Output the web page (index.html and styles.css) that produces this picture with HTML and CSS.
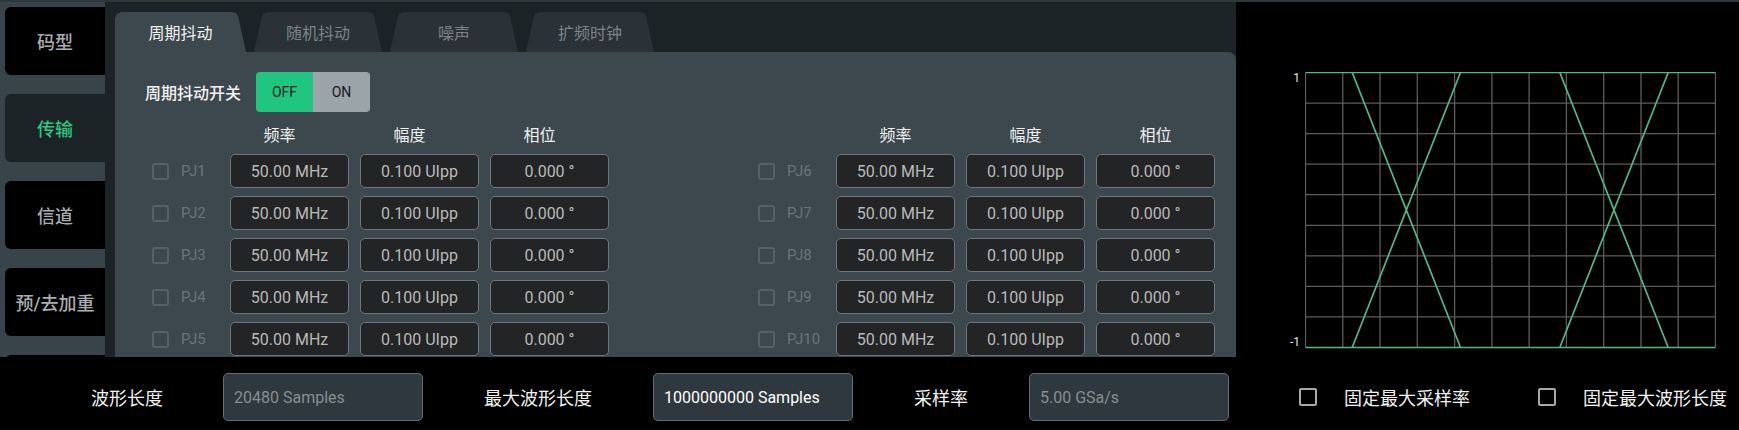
FILE: index.html
```html
<!DOCTYPE html>
<html lang="zh-CN">
  <head>
      <meta charset="UTF-8">
      <meta name="viewport" content="width=device-width, initial-scale=1.0">
      <title>传输 - 周期抖动</title>
      <link rel="stylesheet" href="styles.css">
  </head>
  <body>
      <div class="top">
          <nav class="side">
              <div class="side-btn">码型</div>
              <div class="side-btn active">传输</div>
              <div class="side-btn">信道</div>
              <div class="side-btn">预/去加重</div>
              <div class="side-btn"></div>
          </nav>

          <section class="center">
              <div class="tabs">
                  <div class="tab first">周期抖动</div>
                  <div class="tab">随机抖动</div>
                  <div class="tab">噪声</div>
                  <div class="tab">扩频时钟</div>
              </div>
              <div class="panel">
                  <div class="switch-row">
                      <span class="switch-label">周期抖动开关</span>
                      <div class="switch"><span class="off">OFF</span><span class="on">ON</span></div>
                  </div>
                  <div class="groups">
                      <!-- PJ1 - PJ5 -->
                      <div class="group shifted">
                          <span></span><span></span>
                          <span class="hd">频率</span><span class="hd">幅度</span><span class="hd">相位</span>

                          <span class="chk"></span><span class="pj">PJ1</span>
                          <span class="field">50.00 MHz</span><span class="field">0.100 UIpp</span><span class="field">0.000 °</span>
                          <span class="chk"></span><span class="pj">PJ2</span>
                          <span class="field">50.00 MHz</span><span class="field">0.100 UIpp</span><span class="field">0.000 °</span>
                          <span class="chk"></span><span class="pj">PJ3</span>
                          <span class="field">50.00 MHz</span><span class="field">0.100 UIpp</span><span class="field">0.000 °</span>
                          <span class="chk"></span><span class="pj">PJ4</span>
                          <span class="field">50.00 MHz</span><span class="field">0.100 UIpp</span><span class="field">0.000 °</span>
                          <span class="chk"></span><span class="pj">PJ5</span>
                          <span class="field">50.00 MHz</span><span class="field">0.100 UIpp</span><span class="field">0.000 °</span>
                      </div>
                      <!-- PJ6 - PJ10 -->
                      <div class="group">
                          <span></span><span></span>
                          <span class="hd">频率</span><span class="hd">幅度</span><span class="hd">相位</span>

                          <span class="chk"></span><span class="pj">PJ6</span>
                          <span class="field">50.00 MHz</span><span class="field">0.100 UIpp</span><span class="field">0.000 °</span>
                          <span class="chk"></span><span class="pj">PJ7</span>
                          <span class="field">50.00 MHz</span><span class="field">0.100 UIpp</span><span class="field">0.000 °</span>
                          <span class="chk"></span><span class="pj">PJ8</span>
                          <span class="field">50.00 MHz</span><span class="field">0.100 UIpp</span><span class="field">0.000 °</span>
                          <span class="chk"></span><span class="pj">PJ9</span>
                          <span class="field">50.00 MHz</span><span class="field">0.100 UIpp</span><span class="field">0.000 °</span>
                          <span class="chk"></span><span class="pj">PJ10</span>
                          <span class="field">50.00 MHz</span><span class="field">0.100 UIpp</span><span class="field">0.000 °</span>
                      </div>
                  </div>
              </div>
          </section>

          <section class="scope">
              <div class="axis"><span>1</span><span>-1</span></div>
              <svg class="eye" width="411" height="277" viewBox="-0.5 -0.5 411 277">
                  <path class="grid" d="M0 0V275M37.3 0V275M74.5 0V275M111.8 0V275M149.1 0V275M186.4 0V275M223.6 0V275M260.9 0V275M298.2 0V275M335.5 0V275M372.7 0V275M410 0V275
                      M0 30.6H410M0 61.1H410M0 91.7H410M0 122.2H410M0 152.8H410M0 183.3H410M0 213.9H410M0 244.4H410"/>
                  <path class="trace" d="M0 0H410M0 275H410M46.7 0L155 275M46.7 275L155 0M254.3 0L362.7 275M254.3 275L362.7 0"/>
              </svg>
          </section>
      </div>

      <div class="bottom">
          <span class="b-label w1">波形长度</span>
          <div class="b-input dim">20480 Samples</div>
          <span class="b-label w2">最大波形长度</span>
          <div class="b-input">1000000000 Samples</div>
          <span class="b-label w3">采样率</span>
          <div class="b-input dim">5.00 GSa/s</div>
          <div class="b-check c1"><span class="box"></span>固定最大采样率</div>
          <div class="b-check c2"><span class="box"></span>固定最大波形长度</div>
      </div>
  </body>
</html>
```

FILE: styles.css
```css
*     {
      box-sizing: border-box;
}
body  {
    margin: 0;
    width: 1739px;
    height: 430px;
    overflow: hidden;
    background: #000;
    color: #fff;
    font-family: Roboto, "Noto Sans CJK SC", sans-serif;
    font-size: 16px;
}

/* ---- upper area ---- */
.top  {
    display: flex;
    height: 357px;
    border-top: 2px solid #2f373b;
}

.side {
    width: 105px;
    background: #38434a;
    padding: 5px 0 0 5px;
    display: flex;
    flex-direction: column;
    gap: 19px;
    overflow: hidden;
}
.side-btn {
    flex: none;
    height: 68px;
    background: #000;
    border-radius: 6px 0 0 6px;
    color: #a8aeb1;
    font-size: 18px;
    font-weight: 500;
    display: flex;
    align-items: center;
    justify-content: center;
}
.side-btn.active {
    background: #1c2326;
    color: #2fc582;
}

.center   {
    width: 1131px;
    background: #1c2326;
    padding: 10px 0 0 10px;
    display: flex;
    flex-direction: column;
}
.tabs {
    display: flex;
    gap: 8px;
    height: 40px;
}
.tab  {
    width: 128px;
    background: #2b3237;
    color: #7b8489;
    display: flex;
    align-items: center;
    justify-content: center;
    clip-path: polygon(0 100%, 8px 4px, 10px 1px, 14px 0, calc(100% - 14px) 0, calc(100% - 10px) 1px, calc(100% - 8px) 4px, 100% 100%);
}
.tab.first    {
    width: 131px;
    background: #3c474e;
    color: #f4f4f4;
    clip-path: polygon(0 100%, 0 6px, 2px 2px, 6px 0, calc(100% - 14px) 0, calc(100% - 10px) 1px, calc(100% - 8px) 4px, 100% 100%);
}

.panel    {
    flex: 1;
    background: #3c474e;
    border-radius: 0 8px 0 0;
    overflow: hidden;
}
.switch-row   {
    display: flex;
    align-items: center;
    gap: 15px;
    margin: 20px 0 0 30px;
}
.switch-label {
    font-weight: 500;
    color: #f2f2f2;
}
.switch   {
    display: flex;
    height: 40px;
    border-radius: 4px;
    overflow: hidden;
    font-size: 14px;
    color: #14191b;
}
.switch span  {
    width: 57px;
    display: flex;
    align-items: center;
    justify-content: center;
}
.switch .off  {
    background: #20c580;
}
.switch .on   {
    background: #9ba4a9;
}

.groups   {
    display: flex;
    gap: 149px;
    padding-left: 37px;
}
.group    {
    display: grid;
    grid-template-columns: 18px 38px 119px 119px 119px;
    grid-auto-rows: 34px;
    column-gap: 11px;
    row-gap: 8px;
    align-items: center;
}
.hd   {
    align-self: end;
    text-align: center;
    color: #f0f0f0;
}
.group.shifted .hd    {
    padding-right: 20px;
}
.chk  {
    width: 17px;
    height: 17px;
    border: 2px solid #55616a;
    border-radius: 3px;
}
.pj   {
    font-size: 15px;
    color: #69757b;
}
.field    {
    height: 34px;
    background: #232425;
    border: 1px solid #6f777b;
    border-radius: 5px;
    color: #b9b9b9;
    display: flex;
    align-items: center;
    justify-content: center;
}

/* ---- eye diagram ---- */
.scope    {
    flex: 1;
    background: #000;
    display: flex;
    align-items: flex-start;
    gap: 5px;
    padding: 70px 0 0 50px;
}
.axis {
    width: 14px;
    height: 276px;
    display: flex;
    flex-direction: column;
    justify-content: space-between;
    align-items: flex-end;
    font-size: 12px;
    line-height: 12px;
    color: #e6e6e6;
}
.eye .grid    {
    stroke: #5c5c5c;
    stroke-width: 1.3;
    fill: none;
}
.eye .trace   {
    stroke: #4dba88;
    stroke-width: 1.7;
    fill: none;
}

/* ---- bottom bar ---- */
.bottom   {
    height: 73px;
    display: flex;
    align-items: center;
    padding: 7px 0 0 31px;
}
.b-label  {
    font-size: 18px;
    text-align: center;
    color: #f2f2f2;
}
.w1   { width: 192px; }
.w2   { width: 230px; }
.w3   { width: 176px; }
.b-input  {
    width: 200px;
    height: 48px;
    background: #2e383e;
    border: 1px solid #646d72;
    border-radius: 5px;
    padding-left: 10px;
    display: flex;
    align-items: center;
    color: #fff;
}
.b-input.dim  {
    color: #878f93;
}
.b-check  {
    display: flex;
    align-items: center;
    font-size: 18px;
    color: #f2f2f2;
}
.b-check .box {
    width: 18px;
    height: 18px;
    border: 2px solid #a9a9a9;
    border-radius: 2px;
    margin-right: 27px;
}
.c1   { margin-left: 70px; }
.c2   { margin-left: 68px; }
```
